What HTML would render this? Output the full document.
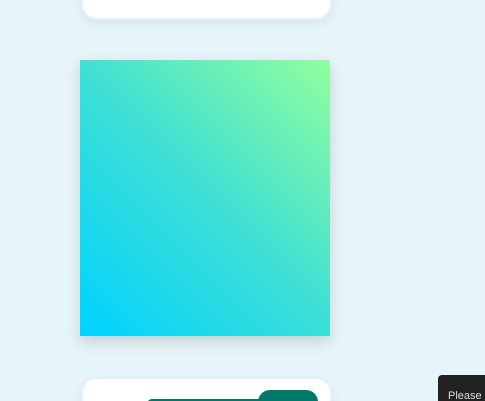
<!DOCTYPE html>
<html><head><style>
html,body{margin:0;width:485px;height:401px;overflow:hidden;background:#e6f5fa;font-family:"Liberation Sans",sans-serif;position:relative}
.card{position:absolute;left:81px;width:247px;background:#fff;border:2px solid #e3f3f9;border-radius:16px;box-shadow:0 4px 10px rgba(0,60,80,.08)}
.grad{position:absolute;left:80px;top:60px;width:250px;height:276px;background:linear-gradient(45deg,#00d2ff 0%,#3ddfd6 50%,#92fe9d 100%);box-shadow:0 6px 14px rgba(0,0,0,.15)}
</style></head><body>
<div class="card" style="top:-20px;height:36px"></div>
<div class="grad"></div>
<div class="card" style="top:377px;height:40px">
<div style="position:absolute;left:64px;top:20px;width:120px;height:10px;background:#00796b;border-radius:5px"></div>
<div style="position:absolute;left:175px;top:11px;width:60px;height:30px;background:#00796b;border-radius:12px"></div>
</div>
<div style="position:absolute;left:438px;top:375px;width:60px;height:40px;background:#222;border-radius:4px;color:#ddd;font-size:11px;padding:15px 0 0 10px;box-sizing:border-box">Please</div>
</body></html>
